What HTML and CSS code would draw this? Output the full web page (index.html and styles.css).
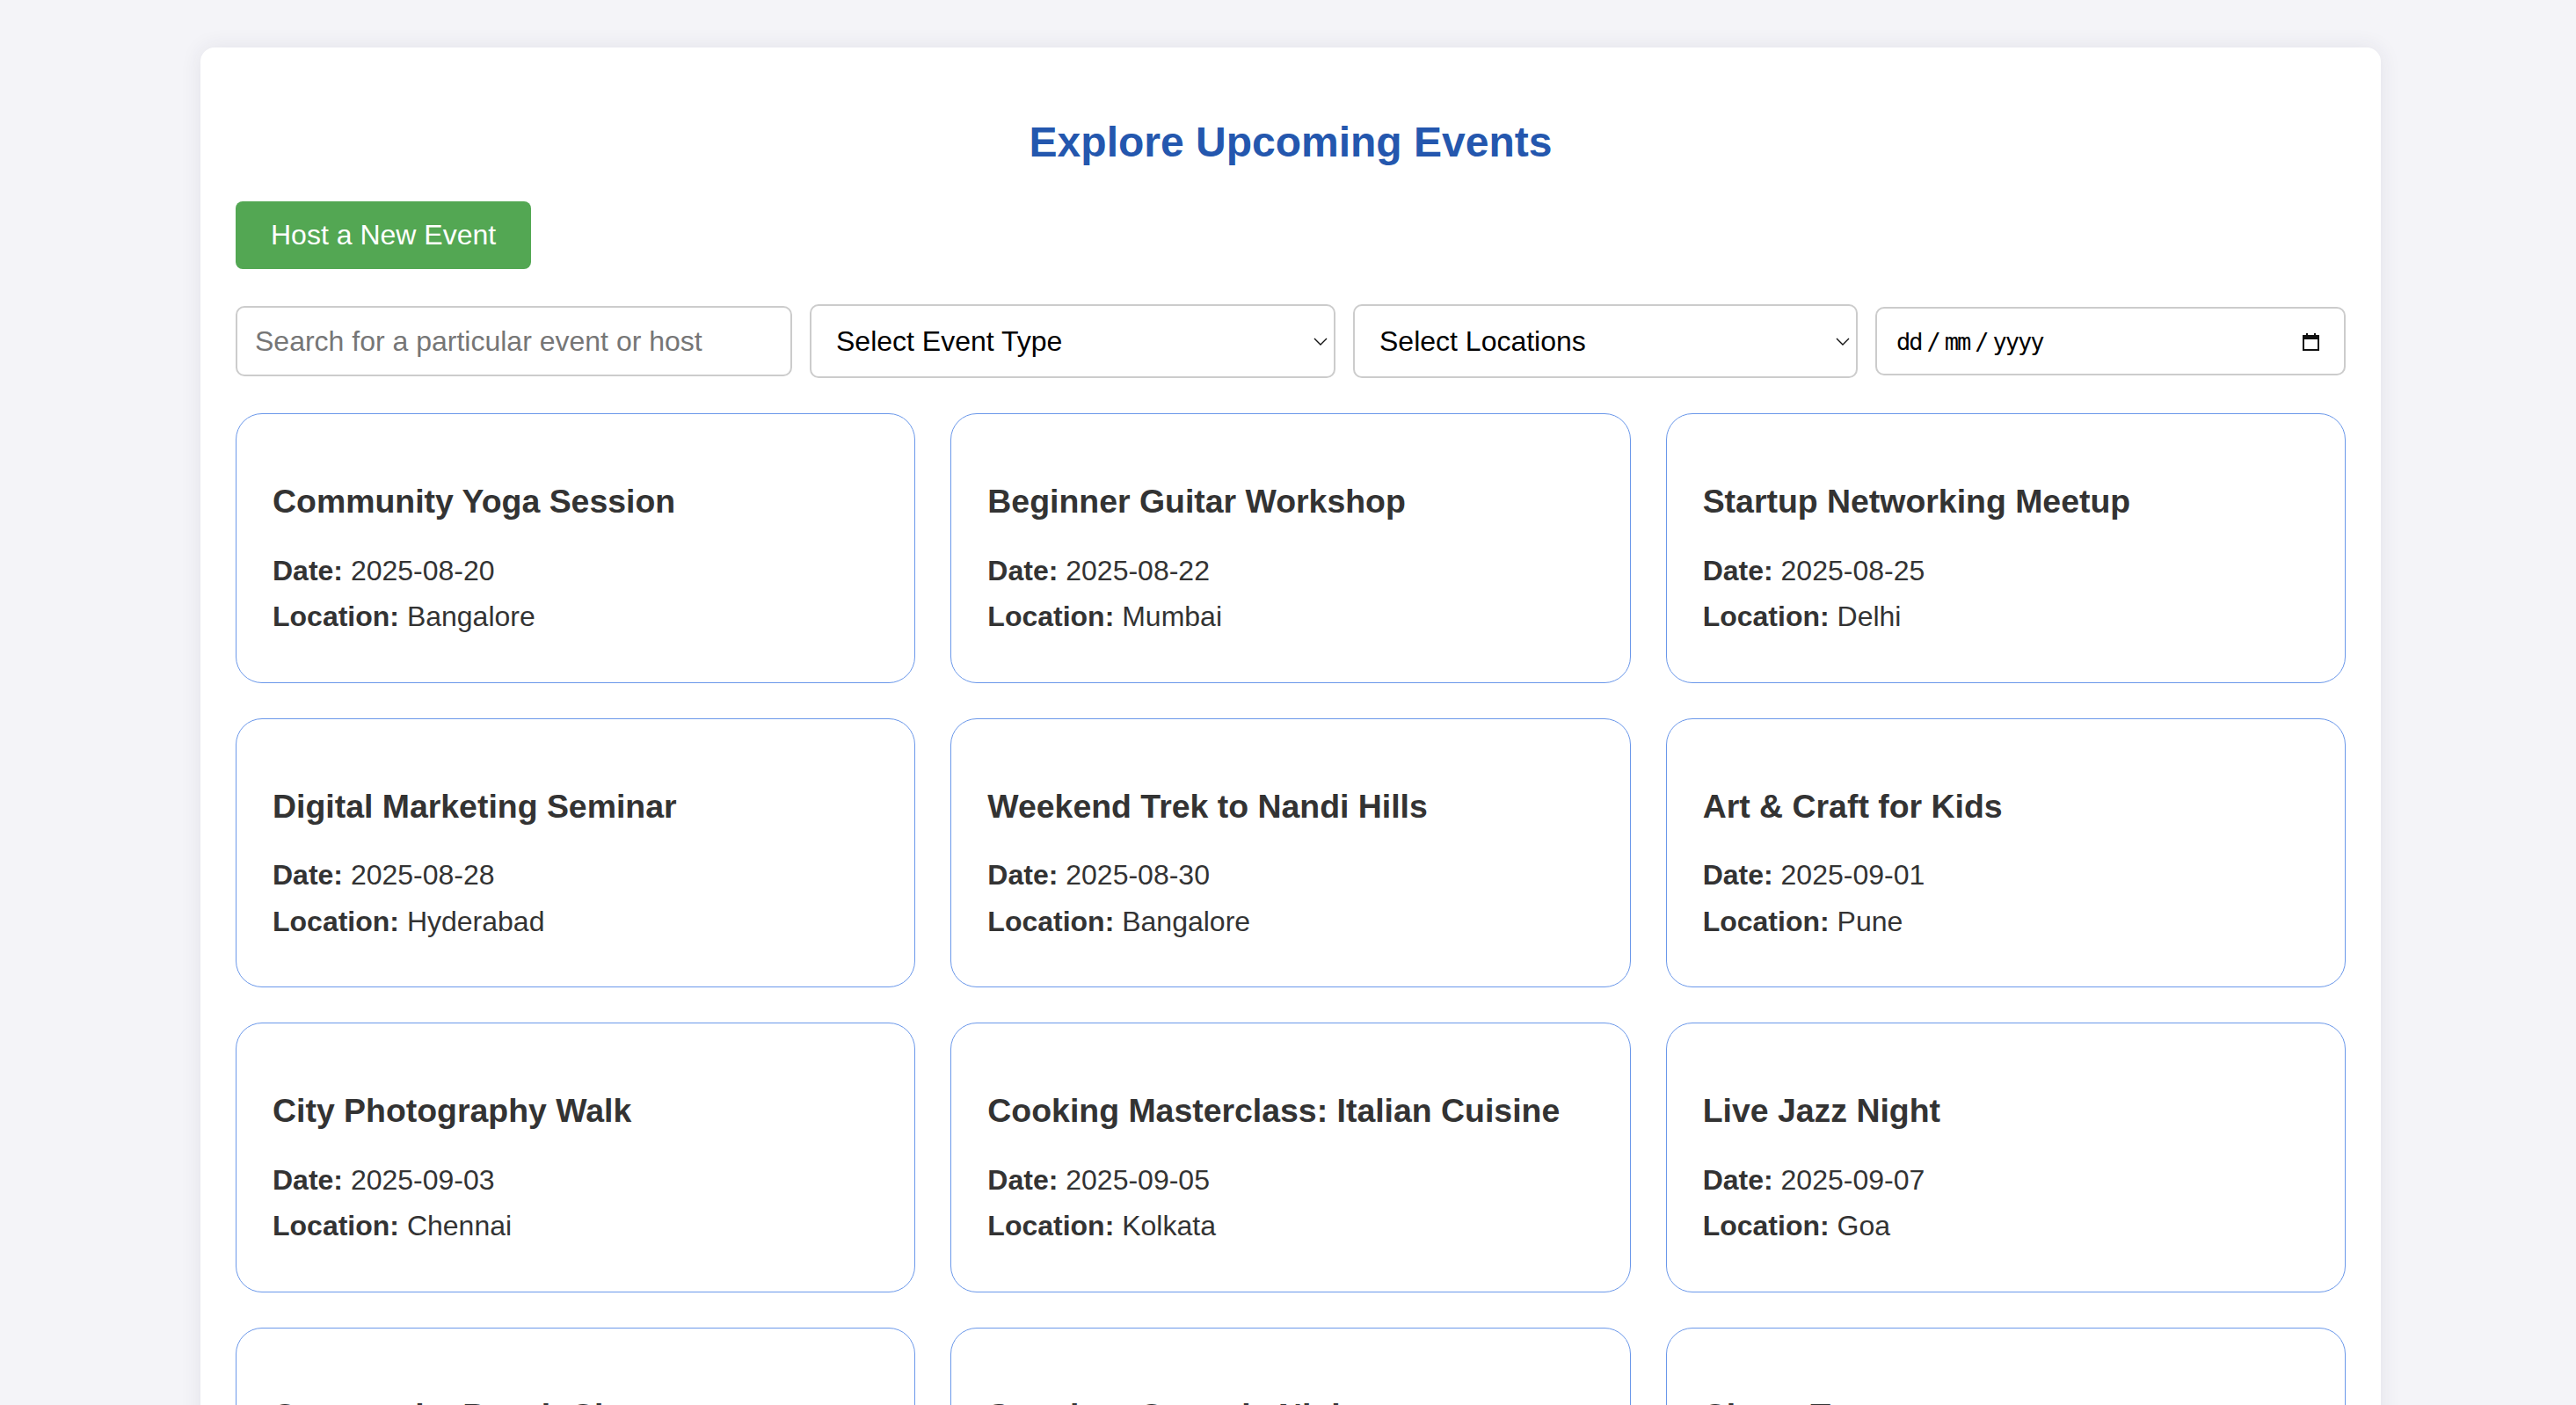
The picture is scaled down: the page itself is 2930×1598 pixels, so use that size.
FILE: index.html
```html
<!DOCTYPE html>
<html lang="en">
<head>
<meta charset="utf-8">
<title>Explore Upcoming Events</title>
<link rel="stylesheet" href="styles.css">
</head>
<body>
<main class="container">
  <h2 class="page-title">Explore Upcoming Events</h2>
  <button class="host-btn" type="button">Host a New Event</button>

  <div class="filters">
    <input class="field search" type="text" placeholder="Search for a particular event or host">
    <div class="select-wrap">
      <select class="field select"><option>Select Event Type</option></select>
      <svg class="chevron" width="16" height="9" viewBox="0 0 16 9"><polyline points="1,1 8,8 15,1" fill="none" stroke="#111" stroke-width="1.4"/></svg>
    </div>
    <div class="select-wrap">
      <select class="field select"><option>Select Locations</option></select>
      <svg class="chevron" width="16" height="9" viewBox="0 0 16 9"><polyline points="1,1 8,8 15,1" fill="none" stroke="#111" stroke-width="1.4"/></svg>
    </div>
    <div class="field date">
      <span class="date-text">dd<span class="sep">/</span>mm<span class="sep">/</span>yyyy</span>
      <svg class="cal" width="19" height="21" viewBox="0 0 19 21">
        <rect x="1" y="4" width="17" height="16" fill="none" stroke="#111" stroke-width="2"/>
        <rect x="1" y="4" width="17" height="4" fill="#111"/>
        <rect x="4" y="1" width="2" height="4" fill="#111"/>
        <rect x="13" y="1" width="2" height="4" fill="#111"/>
      </svg>
    </div>
  </div>

  <section class="events">
    <article class="card"><h3>Community Yoga Session</h3><p><b>Date:</b> 2025-08-20</p><p><b>Location:</b> Bangalore</p></article>
    <article class="card"><h3>Beginner Guitar Workshop</h3><p><b>Date:</b> 2025-08-22</p><p><b>Location:</b> Mumbai</p></article>
    <article class="card"><h3>Startup Networking Meetup</h3><p><b>Date:</b> 2025-08-25</p><p><b>Location:</b> Delhi</p></article>
    <article class="card"><h3>Digital Marketing Seminar</h3><p><b>Date:</b> 2025-08-28</p><p><b>Location:</b> Hyderabad</p></article>
    <article class="card"><h3>Weekend Trek to Nandi Hills</h3><p><b>Date:</b> 2025-08-30</p><p><b>Location:</b> Bangalore</p></article>
    <article class="card"><h3>Art &amp; Craft for Kids</h3><p><b>Date:</b> 2025-09-01</p><p><b>Location:</b> Pune</p></article>
    <article class="card"><h3>City Photography Walk</h3><p><b>Date:</b> 2025-09-03</p><p><b>Location:</b> Chennai</p></article>
    <article class="card"><h3>Cooking Masterclass: Italian Cuisine</h3><p><b>Date:</b> 2025-09-05</p><p><b>Location:</b> Kolkata</p></article>
    <article class="card"><h3>Live Jazz Night</h3><p><b>Date:</b> 2025-09-07</p><p><b>Location:</b> Goa</p></article>
    <article class="card"><h3>Community Beach Cleanup</h3><p><b>Date:</b> 2025-09-10</p><p><b>Location:</b> Goa</p></article>
    <article class="card"><h3>Stand-up Comedy Night</h3><p><b>Date:</b> 2025-09-12</p><p><b>Location:</b> Mumbai</p></article>
    <article class="card"><h3>Chess Tournament</h3><p><b>Date:</b> 2025-09-14</p><p><b>Location:</b> Delhi</p></article>
  </section>
</main>
</body>
</html>
```

FILE: styles.css
```css
html, body {
  margin: 0;
  padding: 0;
  overflow: hidden;
}

body {
  background: #f4f4f8;
  font-family: "Liberation Sans", Arial, Helvetica, sans-serif;
  color: #333;
}

.container {
  box-sizing: border-box;
  width: 2480px;
  margin: 54px 0 0 228px;
  padding: 40px 40px 60px;
  background: #fff;
  border-radius: 16px;
  box-shadow: 0 0 24px rgba(40, 40, 80, 0.09);
}

.page-title {
  margin: 40px 0;
  text-align: center;
  font-size: 48px;
  font-weight: 700;
  line-height: 55px;
  color: #2457ae;
}

.host-btn {
  display: block;
  box-sizing: border-box;
  height: 77px;
  padding: 0 40px;
  margin: 0 0 40px;
  border: none;
  border-radius: 8px;
  background: #53a753;
  color: #fff;
  font-family: "Liberation Sans", Arial, sans-serif;
  font-size: 32px;
  cursor: pointer;
}

.filters {
  display: grid;
  grid-template-columns: 633px 598px 574px 1fr;
  gap: 20px;
  align-items: center;
  margin-bottom: 40px;
}

.field {
  box-sizing: border-box;
  width: 100%;
  border: 2px solid #cccccc;
  border-radius: 10px;
  background: #fff;
  font-family: "Liberation Sans", Arial, sans-serif;
  font-size: 32px;
  color: #000;
  outline: none;
}

.search {
  height: 80px;
  padding: 0 20px;
}

.search::placeholder {
  color: #767676;
}

.select-wrap {
  position: relative;
  height: 84px;
}

.select {
  height: 84px;
  padding: 0 60px 0 28px;
  appearance: none;
  -webkit-appearance: none;
}

.chevron {
  position: absolute;
  right: 9px;
  top: 38px;
  pointer-events: none;
}

.date {
  height: 78px;
  display: flex;
  align-items: center;
  justify-content: space-between;
  padding: 0 28px 0 22px;
}

.date-text {
  font-family: "DejaVu Sans Mono", "Liberation Mono", monospace;
  font-size: 27px;
  letter-spacing: -2px;
  color: #000;
}

.date-text .sep {
  margin: 0 6px;
}

.cal {
  display: block;
}

.events {
  display: grid;
  grid-template-columns: repeat(3, 1fr);
  gap: 40px;
}

.card {
  border: 1px solid #6b98ea;
  border-radius: 30px;
  padding: 41px 41px 40px;
}

.card h3 {
  margin: 37px 0 39.5px;
  font-size: 37.44px;
  line-height: 42px;
  font-weight: 700;
  color: #333;
}

.card p {
  margin: 16px 0;
  font-size: 32px;
  line-height: 36.5px;
  color: #333;
}

.card p b {
  font-weight: 700;
}
```
